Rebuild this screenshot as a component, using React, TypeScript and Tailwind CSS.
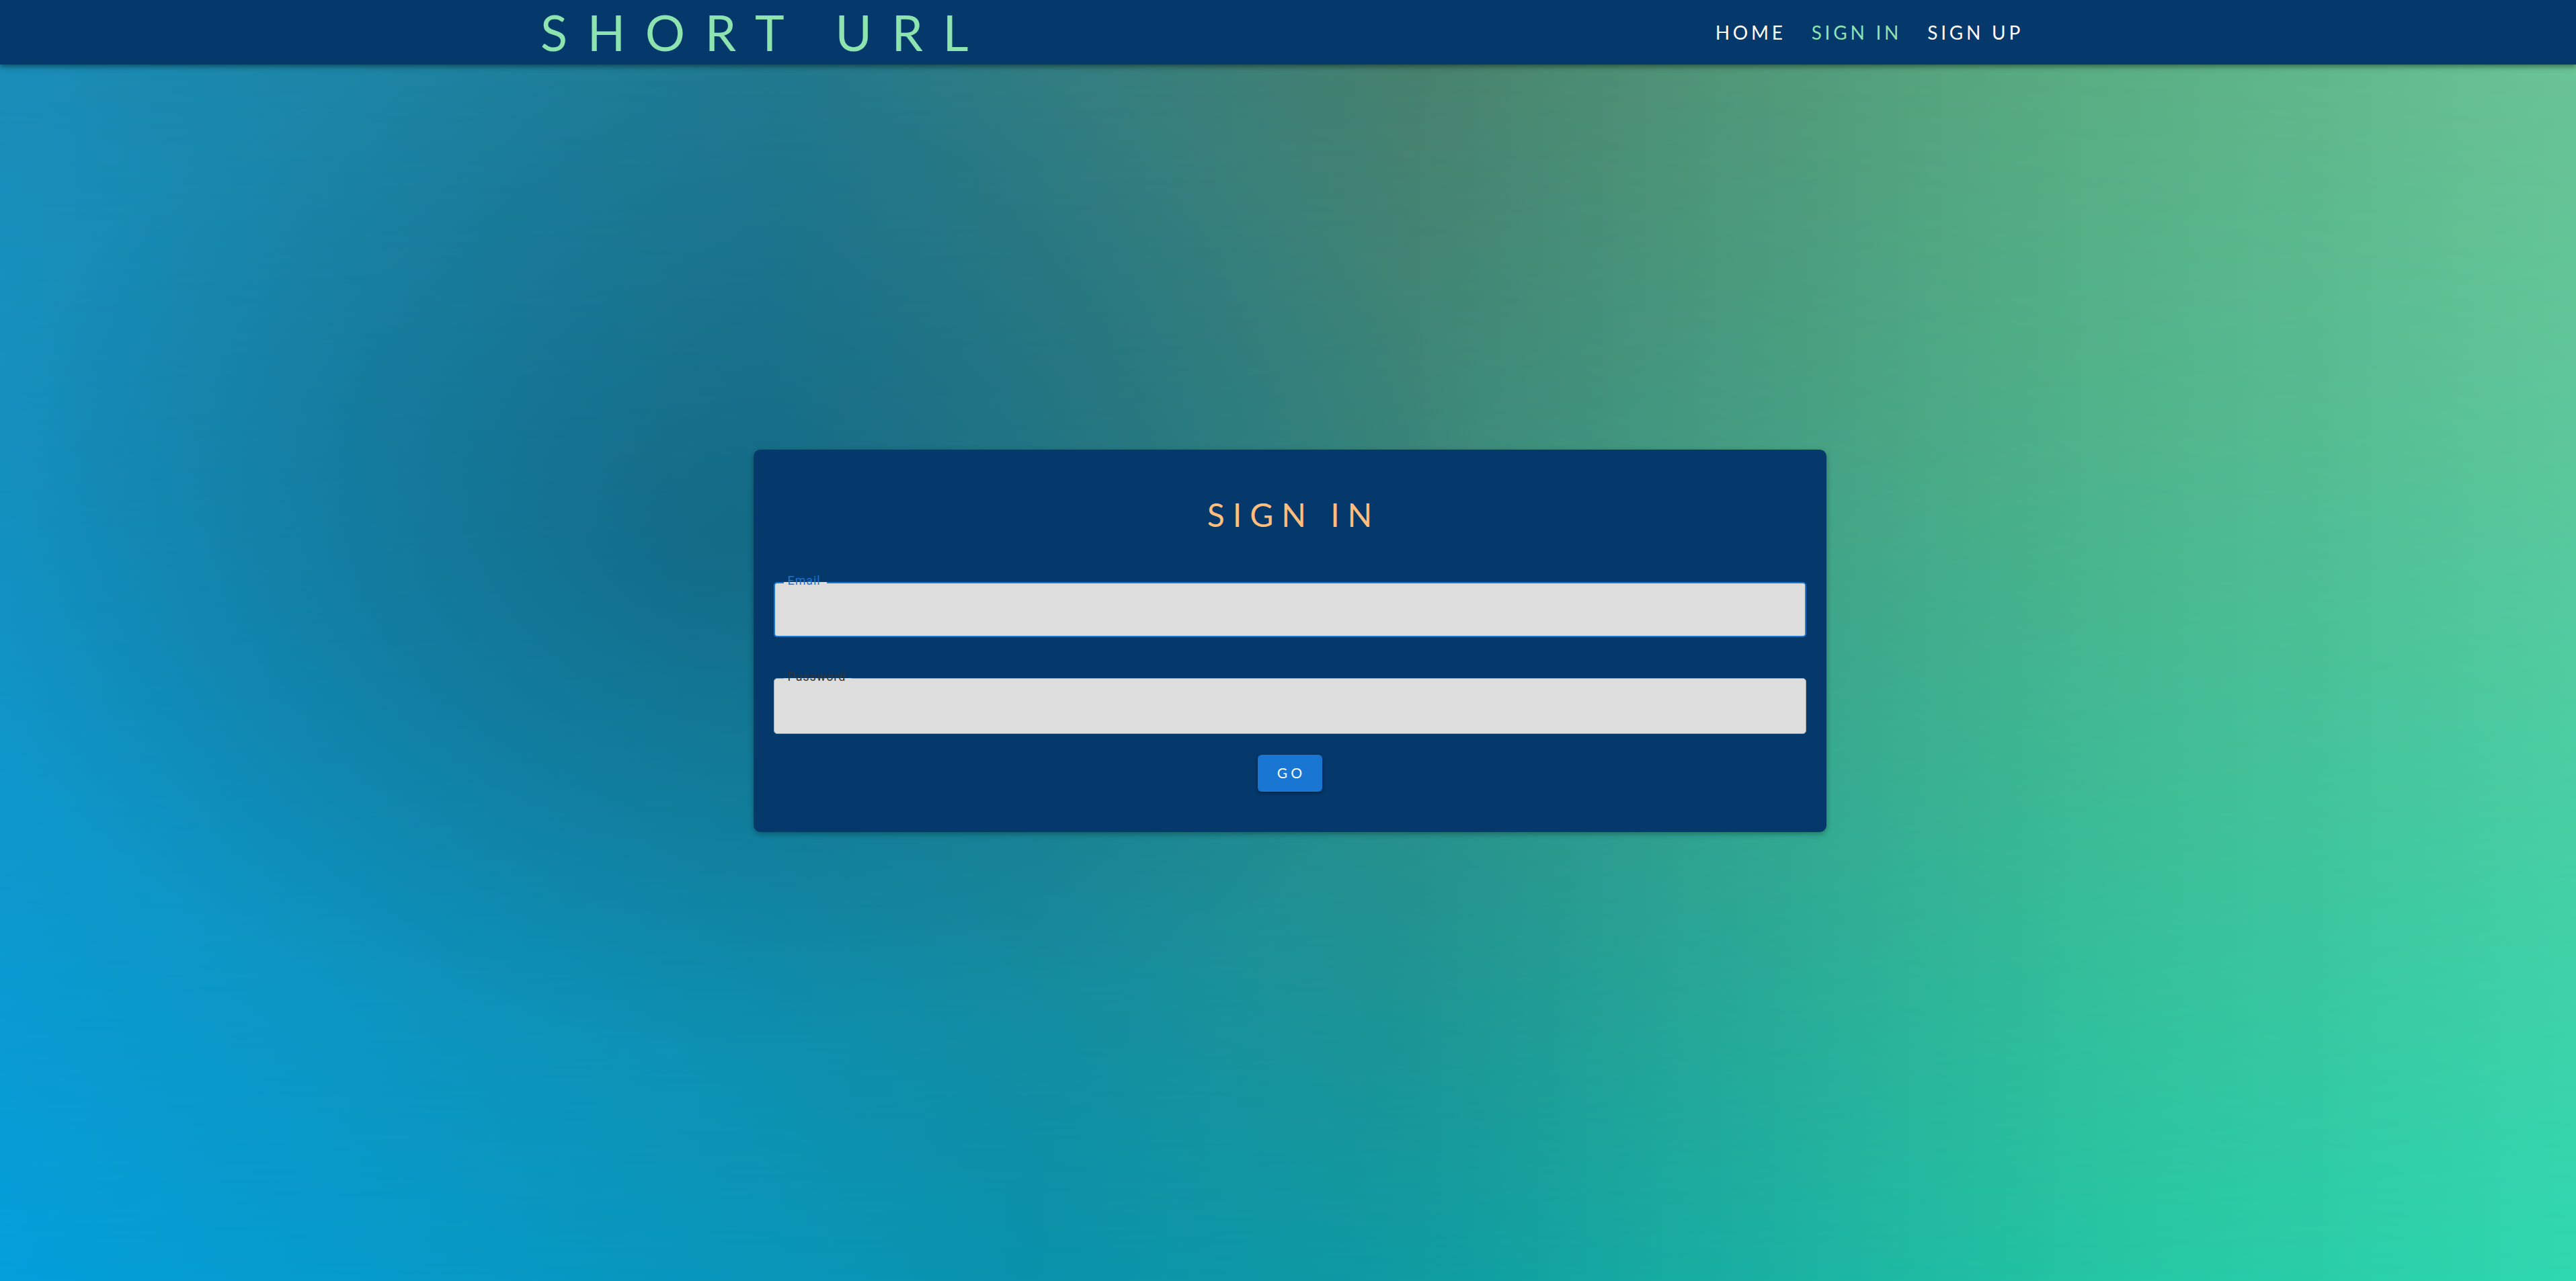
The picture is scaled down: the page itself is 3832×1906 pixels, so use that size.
import React from "react";

function Field({ label, focused }: { label: string; focused?: boolean }) {
  return (
    <div className="relative w-full">
      <div
        className={
          focused
            ? "h-[82px] rounded-[5px] border-2 border-[#1976d2] bg-[#dddddd]"
            : "h-[83px] rounded-[5px] border border-[#a8a8a8] bg-[#dddddd]"
        }
      />
      <span
        className={
          "absolute left-[15px] top-[-12px] pl-[6px] pr-[9px] text-[18px] leading-[20px] tracking-[0.05em] font-['Roboto',sans-serif] bg-[linear-gradient(to_bottom,transparent_12px,#dddddd_12px)] " +
          (focused ? "text-[#1976d2]" : "text-[#333333]")
        }
      >
        {label}
      </span>
    </div>
  );
}

export default function App() {
  return (
    <div className="relative h-[1906px] w-full overflow-hidden bg-[linear-gradient(to_right,#05a0dc_0%,#0a93ad_40%,#0f9ca2_55%,#25c7a4_82%,#2fd8b0_100%)] font-['Lato',sans-serif]">
      <div className="absolute inset-0 bg-[linear-gradient(to_right,#1a8cb6_0%,#22798e_30%,#4a806c_55%,#5aa87f_78%,#6cc294_100%)] [mask-image:linear-gradient(to_bottom,#000_0%,rgba(0,0,0,0.75)_35%,transparent_100%)]" />
      <div className="absolute inset-0 bg-[radial-gradient(ellipse_30%_40%_at_28%_42%,rgba(10,70,100,0.4),transparent)]" />

      <div className="relative flex h-full flex-col">
        <header className="flex h-[96px] shrink-0 items-center bg-[#05386b] shadow-[0_3px_8px_rgba(0,0,0,0.45)]">
          <div className="mx-auto flex w-[2240px] items-center justify-between">
            <span className="pl-[8px] text-[74px] font-normal leading-none tracking-[0.4em] text-[#8ee4af]">
              SHORT URL
            </span>
            <nav className="flex items-center gap-[38px] pr-[26px] text-[28px] leading-none tracking-[0.17em]">
              <span className="text-white">HOME</span>
              <span className="text-[#8ee4af]">SIGN IN</span>
              <span className="text-white">SIGN UP</span>
            </nav>
          </div>
        </header>

        <main className="flex flex-1 items-center justify-center pb-[96px] pl-[5px]">
          <div className="flex h-[569px] w-[1596px] flex-col rounded-[10px] bg-[#05386b] px-[30px] pt-[73px] shadow-[0_3px_8px_rgba(0,0,0,0.3)]">
            <h1 className="h-[48px] pl-[12px] text-center text-[48px] font-normal leading-[48px] tracking-[0.25em] text-[#ffbe7d]">
              SIGN IN
            </h1>
            <div className="mt-[76px]">
              <Field label="Email" focused />
            </div>
            <div className="mt-[61px]">
              <Field label="Password" />
            </div>
            <div className="mt-[31px] flex justify-center">
              <button className="h-[55px] w-[96px] rounded-[6px] bg-[#1976d2] pl-[5px] text-[21px] tracking-[0.25em] text-white shadow-[0_2px_5px_rgba(0,0,0,0.35)]">
                GO
              </button>
            </div>
          </div>
        </main>
      </div>
    </div>
  );
}
